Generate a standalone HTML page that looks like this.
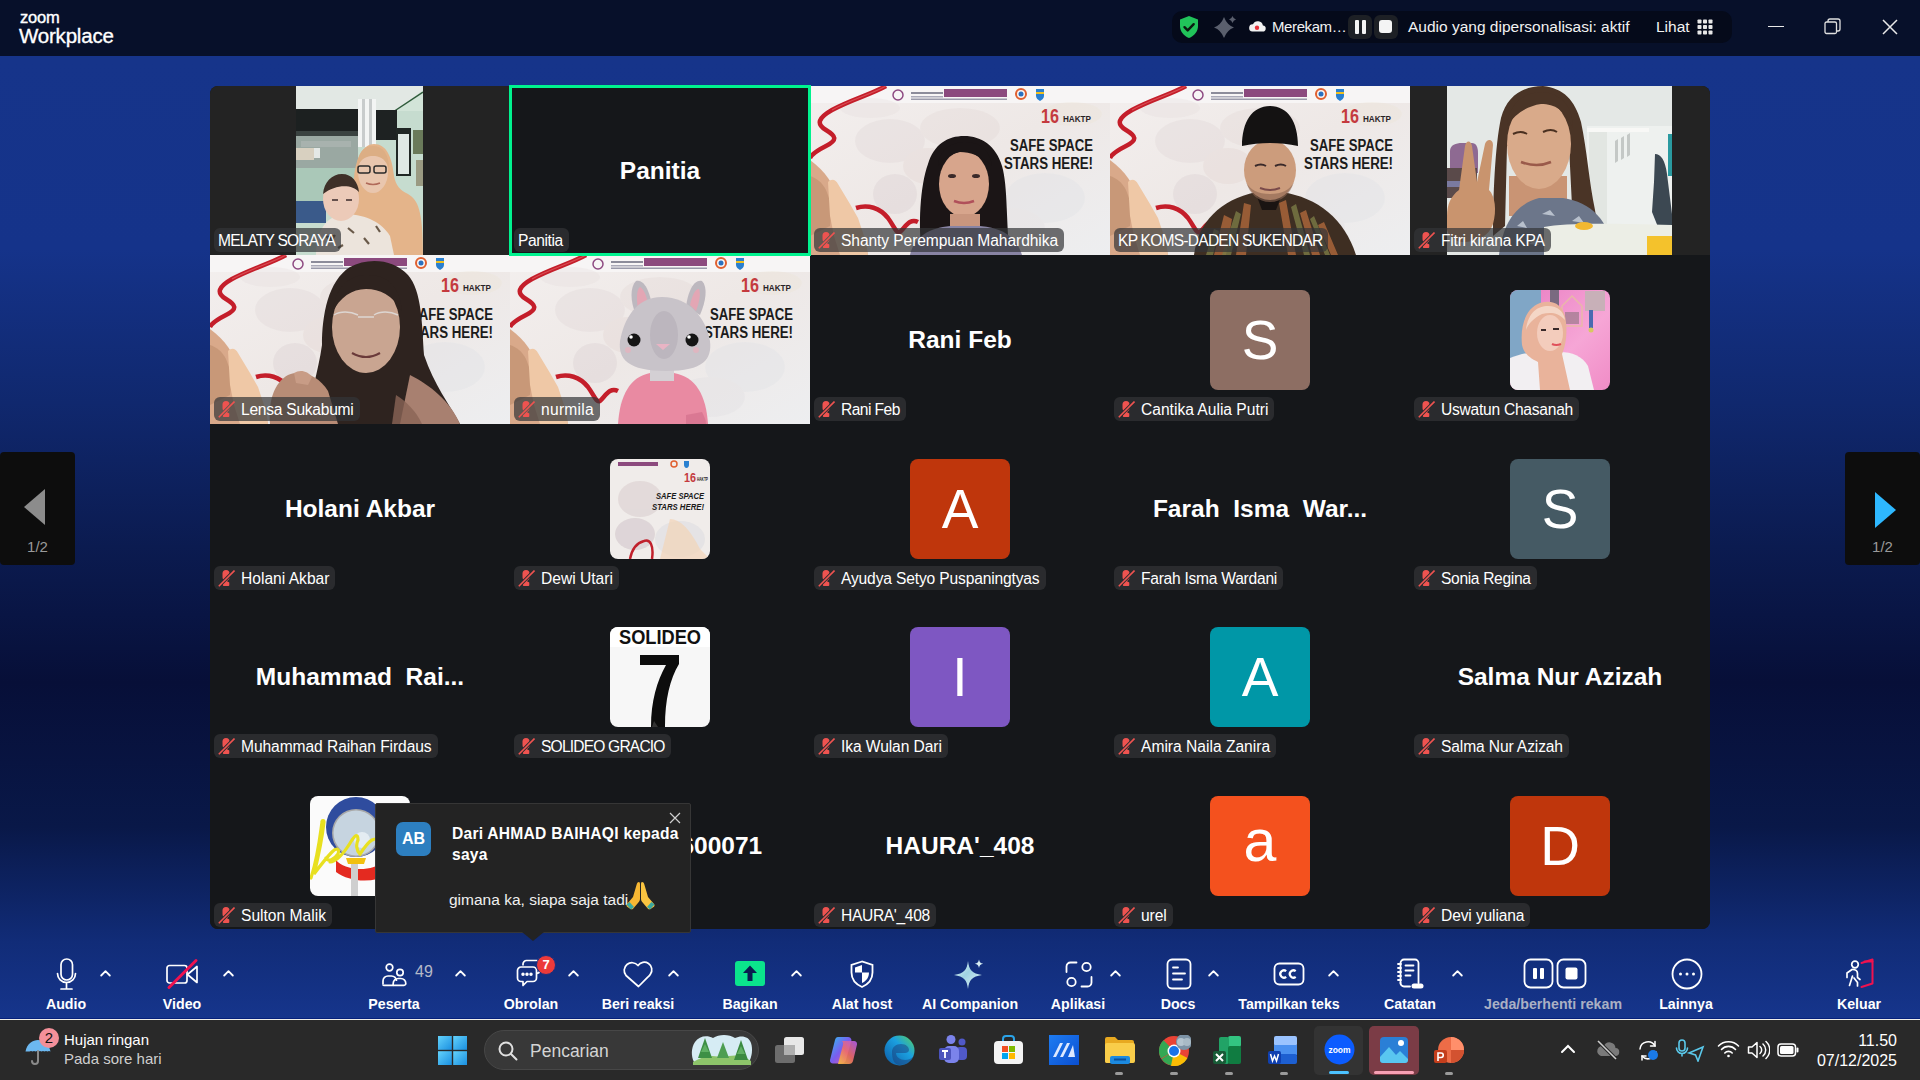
<!DOCTYPE html>
<html><head><meta charset="utf-8">
<style>
*{margin:0;padding:0;box-sizing:border-box}
html,body{width:1920px;height:1080px;overflow:hidden;font-family:"Liberation Sans",sans-serif;color:#fff}
body{position:relative;background:#0a153f}
.abs{position:absolute}
.tx15{font-size:15.5px;line-height:20px;white-space:nowrap;color:#f2f2f2}
#top{left:0;top:0;width:1920px;height:56px;background:#07102a}
#main{left:0;top:56px;width:1920px;height:963px;background:linear-gradient(180deg,#16348a 0%,#15338a 20%,#10286e 36%,#0b1b50 51%,#070f38 65%,#091848 80%,#112c78 92%,#16358c 100%)}
#grid{left:210px;top:86px;width:1500px;height:843px;border-radius:8px;overflow:hidden;background:#15171a}
.t{position:absolute;width:300px;height:169px;overflow:hidden;background:#15171a}
.lbl{position:absolute;left:4px;top:142px;height:24px;border-radius:6px;background:rgba(51,52,55,.7);font-size:15.6px;line-height:25px;padding:0 6px 0 4px;white-space:nowrap;color:#fff}
.lbl.m{padding-left:27px}
.lbl svg{position:absolute;left:4px;top:4px}
.big{position:absolute;left:0;top:0;width:300px;height:169px;display:flex;align-items:center;justify-content:center;font-weight:bold;font-size:24.5px;white-space:nowrap}
.av{position:absolute;left:100px;top:35px;width:100px;height:100px;border-radius:8px;display:flex;align-items:center;justify-content:center;font-size:55px;color:#fff;overflow:hidden}
.vb{position:absolute;left:0;top:0}
.hl{position:absolute;left:-1px;top:-1px;width:301px;height:170px;border:3px solid #00f090}
#taskbar{left:0;top:1019px;width:1920px;height:61px;background:#292929;}
.nav{position:absolute;top:452px;width:75px;height:113px;background:#0d0d0d;border-radius:4px}
.nav .pg{position:absolute;width:75px;text-align:center;top:86px;font-size:15px;color:#9a9a9a}
.tb{position:absolute;top:955px;height:60px;text-align:center;font-size:15px;font-weight:bold;color:#fff}
.tb .lab{position:absolute;left:-60px;right:-60px;top:38px;text-align:center;white-space:nowrap}
.tlab{top:995px;width:200px;text-align:center;font-size:14.2px;font-weight:bold;line-height:18px;white-space:nowrap}
</style></head>
<body>
<div id="top" class="abs">
 <div class="abs" style="left:20px;top:10px;font-size:16.5px;letter-spacing:-0.2px;line-height:15px;-webkit-text-stroke:0.4px #fff">zoom</div>
 <div class="abs" style="left:19px;top:24px;font-size:20.5px;line-height:24px;letter-spacing:-0.2px;-webkit-text-stroke:0.35px #fff">Workplace</div>
 <div class="abs" style="left:1172px;top:11px;width:560px;height:32px;border-radius:10px;background:#050a1a"></div>
 <svg class="abs" style="left:1178px;top:15px" width="22" height="24" viewBox="0 0 22 24"><path d="M11 1L2 4.5v6.5c0 5.5 3.8 10 9 12 5.2-2 9-6.5 9-12V4.5z" fill="#21c35a"/><path d="M6.5 12.2l3.2 3.2 6-6.2" stroke="#0b1a10" stroke-width="2.4" fill="none" stroke-linecap="round" stroke-linejoin="round"/></svg>
 <svg class="abs" style="left:1214px;top:14px" width="24" height="24" viewBox="0 0 24 24"><path d="M10 3Q13 11 20 13.5 13 16 10 24 7 16 0 13.5 7 11 10 3z" fill="#5a5f6d"/><path d="M18.5 2Q19.3 4.7 22 5.5 19.3 6.3 18.5 9 17.7 6.3 15 5.5 17.7 4.7 18.5 2z" fill="#5a5f6d"/></svg>
 <svg class="abs" style="left:1248px;top:19px" width="18" height="14" viewBox="0 0 18 14"><path d="M4.5 12.5h10a3 3 0 0 0 .4-6A5.2 5.2 0 0 0 5 5.3 3.6 3.6 0 0 0 4.5 12.5z" fill="#f2f2f2"/><circle cx="9" cy="8.7" r="2.2" fill="#e8313b"/></svg>
 <div class="abs tx15" style="left:1272px;top:17px;letter-spacing:-0.4px;font-size:15px">Merekam…</div>
 <div class="abs" style="left:1348px;top:15px;width:24px;height:24px;border-radius:6px;background:#1d2025"></div>
 <div class="abs" style="left:1355px;top:20px;width:4px;height:14px;border-radius:1px;background:#f4f4f4"></div>
 <div class="abs" style="left:1362px;top:20px;width:4px;height:14px;border-radius:1px;background:#f4f4f4"></div>
 <div class="abs" style="left:1374px;top:15px;width:24px;height:24px;border-radius:6px;background:#1d2025"></div>
 <div class="abs" style="left:1379px;top:20px;width:13px;height:13px;border-radius:3px;background:#f4f4f4"></div>
 <div class="abs tx15" style="left:1408px;top:17px">Audio yang dipersonalisasi: aktif</div>
 <div class="abs tx15" style="left:1656px;top:17px">Lihat</div>
 <svg class="abs" style="left:1697px;top:19px" width="16" height="16" viewBox="0 0 16 16" fill="#e8e8e8"><rect x="0.5" y="0.5" width="4" height="4" rx=".8"/><rect x="6" y="0.5" width="4" height="4" rx=".8"/><rect x="11.5" y="0.5" width="4" height="4" rx=".8"/><rect x="0.5" y="6" width="4" height="4" rx=".8"/><rect x="6" y="6" width="4" height="4" rx=".8"/><rect x="11.5" y="6" width="4" height="4" rx=".8"/><rect x="0.5" y="11.5" width="4" height="4" rx=".8"/><rect x="6" y="11.5" width="4" height="4" rx=".8"/><rect x="11.5" y="11.5" width="4" height="4" rx=".8"/></svg>
 <div class="abs" style="left:1768px;top:26px;width:16px;height:1px;background:#e8e8e8"></div>
 <svg class="abs" style="left:1824px;top:18px" width="17" height="17" viewBox="0 0 17 17" fill="none" stroke="#e0e0e0" stroke-width="1.3"><rect x="1" y="4" width="11.5" height="11.5" rx="1.5"/><path d="M4 4V3a2 2 0 0 1 2-2h8a2 2 0 0 1 2 2v8a2 2 0 0 1-2 2h-1.5"/></svg>
 <svg class="abs" style="left:1882px;top:19px" width="16" height="16" viewBox="0 0 16 16" stroke="#e8e8e8" stroke-width="1.5"><path d="M1 1L15 15M15 1L1 15"/></svg>
</div>
<div id="main" class="abs"></div>
<div id="grid" class="abs">
<svg width="0" height="0" style="position:absolute"><defs>
<linearGradient id="sbg" x1="0" y1="0" x2="1" y2="1"><stop offset="0" stop-color="#f3efee"/><stop offset=".5" stop-color="#eee8e6"/><stop offset="1" stop-color="#edeef0"/></linearGradient>
<symbol id="safebg" viewBox="0 0 300 169">
<rect width="300" height="169" fill="url(#sbg)"/>
<rect y="0" width="300" height="17" fill="#f7f5f5"/>
<g opacity=".3">
<ellipse cx="80" cy="55" rx="35" ry="22" fill="#ddd3d4"/>
<ellipse cx="150" cy="42" rx="40" ry="20" fill="#e0d5d3"/>
<ellipse cx="85" cy="108" rx="22" ry="20" fill="#d5cacd"/>
<ellipse cx="118" cy="80" rx="25" ry="18" fill="#e1d2ce"/>
<ellipse cx="235" cy="112" rx="40" ry="25" fill="#dde0e5"/>
<ellipse cx="200" cy="142" rx="35" ry="20" fill="#dfdde1"/>
<ellipse cx="60" cy="22" rx="30" ry="10" fill="#e4dcdc"/>
<ellipse cx="262" cy="28" rx="30" ry="12" fill="#ebe4d4"/>
<ellipse cx="150" cy="150" rx="40" ry="18" fill="#ddd4d4"/>
</g>
<path d="M0 74C8 80 14 86 18 92L30 110 44 132 56 160 58 169H0z" fill="#d9a98a"/>
<path d="M0 90C6 92 12 96 16 104L22 120 20 140 0 150z" fill="#c89878"/>
<path d="M18 96C22 92 26 94 28 98L40 118 48 132 56 156 58 169H30L24 150 20 130z" fill="#efc8a6"/>
<path d="M76 0C62 8 40 14 22 24 8 32 6 38 16 44 26 50 28 54 16 60 8 64 2 68 0 72" stroke="#c41e2a" stroke-width="4.5" fill="none"/>
<path d="M76 0C62 8 40 14 22 24" stroke="#e86a70" stroke-width="1.2" fill="none" opacity=".6"/>
<path d="M46 122C58 118 70 122 78 132 84 140 86 148 90 146 96 140 100 132 108 136" stroke="#c41e2a" stroke-width="4.5" fill="none"/>
<circle cx="88" cy="9" r="5" fill="none" stroke="#8e4a82" stroke-width="1.5"/>
<rect x="101" y="6" width="32" height="2" fill="#8c8c9a"/><rect x="101" y="10" width="32" height="1.5" fill="#aaaab8"/>
<rect x="134" y="3" width="63" height="8" fill="#8c4a7e"/>
<rect x="101" y="12.5" width="96" height="1.5" fill="#9a9aaa"/>
<circle cx="211" cy="8" r="5" fill="none" stroke="#e06030" stroke-width="2"/>
<circle cx="211" cy="8" r="2.5" fill="#2a70c0"/>
<path d="M226 3h8v7c0 2-2 4-4 5-2-1-4-3-4-5z" fill="#2a80d0"/><rect x="226" y="6" width="8" height="2" fill="#f0c020"/>
<text x="231" y="37" font-family="Liberation Sans" font-weight="bold" font-size="20" fill="#c43a3e" textLength="18" lengthAdjust="spacingAndGlyphs">16</text>
<text x="253" y="36" font-family="Liberation Sans" font-weight="bold" font-size="9.5" fill="#2a2226" textLength="28" lengthAdjust="spacingAndGlyphs">HAKTP</text>
<text x="200" y="64.5" font-family="Liberation Sans" font-weight="bold" font-size="16" fill="#1b1b1b" textLength="83" lengthAdjust="spacingAndGlyphs">SAFE SPACE</text>
<text x="194" y="83" font-family="Liberation Sans" font-weight="bold" font-size="16" fill="#1b1b1b" textLength="89" lengthAdjust="spacingAndGlyphs">STARS HERE!</text>
</symbol>
</defs></svg><svg width="0" height="0" style="position:absolute"><defs><mask id="micmask" maskUnits="userSpaceOnUse" x="0" y="0" width="17" height="17"><rect width="17" height="17" fill="#fff"/><path d="M0.8 16.2L16.5 0.5" stroke="#000" stroke-width="3.4"/></mask></defs></svg><div class="t " style="left:0px;top:0px;background:#232323"><svg class="vb" width="127" height="169" viewBox="0 0 127 169" style="left:86px">
<rect x="0" y="0" width="127" height="169" fill="#c6dccf"/>
<rect x="0" y="0" width="127" height="24" fill="#e2e8e4"/>
<path d="M127 4L100 25H127z" fill="#d2e4d8"/>
<path d="M127 6l-30 20" stroke="#2e5a3a" stroke-width="1.5"/>
<rect x="0" y="23" width="62" height="22" fill="#1c2020"/><rect x="0" y="45" width="62" height="6" fill="#3a4240"/>
<rect x="0" y="50" width="62" height="32" fill="#9aa8a2"/><rect x="4" y="62" width="20" height="10" fill="#e4e8e6"/>
<rect x="5" y="55" width="50" height="6" fill="#a8b2ae"/>
<rect x="0" y="62" width="18" height="12" fill="#d8d0c0"/>
<rect x="62" y="13" width="18" height="48" fill="#f3f5f4"/>
<rect x="66" y="13" width="3" height="48" fill="#c8cccc"/>
<rect x="73" y="13" width="3" height="48" fill="#c8cccc"/>
<rect x="80" y="24" width="21" height="30" fill="#1e2222"/>
<rect x="100" y="42" width="15" height="48" fill="#202624"/>
<rect x="102" y="48" width="11" height="40" fill="#dfe8e4"/>
<rect x="117" y="44" width="10" height="24" fill="#6a7a5a"/>
<rect x="120" y="74" width="7" height="26" fill="#9a9a82"/>
<rect x="0" y="82" width="62" height="36" fill="#aac8b8"/>
<rect x="0" y="115" width="30" height="22" fill="#3a5a8a"/>
<path d="M55 169C55 140 56 110 58 92 60 70 68 58 78 58 90 58 96 70 98 90 100 100 104 104 112 108 122 114 127 124 127 169z" fill="#e4b48a"/>
<ellipse cx="77" cy="86" rx="15" ry="21" fill="#e9c6ae"/>
<path d="M61 82c0-14 6-22 16-22 10 0 16 8 16 22-4-10-10-12-16-12-6 0-12 2-16 12z" fill="#dcae84"/>
<rect x="62" y="80" width="12" height="7" rx="2" fill="none" stroke="#2a2a2a" stroke-width="1.5"/>
<rect x="78" y="80" width="12" height="7" rx="2" fill="none" stroke="#2a2a2a" stroke-width="1.5"/>
<path d="M70 97q7 3 14 0" stroke="#b06a5a" stroke-width="1.5" fill="none"/>
<path d="M20 169C20 145 30 130 48 128 66 128 84 134 94 150L98 169z" fill="#ece4dc"/>
<path d="M30 150l5 5 4-6M52 142l6 5M68 152l5 6M42 162l5-3M80 140l4 6" stroke="#6a5a4a" stroke-width="2.2"/>
<ellipse cx="45" cy="113" rx="18" ry="22" fill="#eccab8"/>
<path d="M27 108C28 96 36 88 46 88 56 88 62 96 63 106 56 98 40 98 27 108z" fill="#3e3028"/>
<path d="M36 114h6M50 114h6" stroke="#3a2a2a" stroke-width="1.5"/>
</svg><div class="lbl" style="letter-spacing:-0.844px">MELATY SORAYA</div></div>
<div class="t " style="left:300px;top:0px;"><div class="big">Panitia</div><div class="lbl" style="letter-spacing:-0.427px">Panitia</div></div>
<div class="t " style="left:600px;top:0px;"><svg class="vb" width="300" height="169" viewBox="0 0 300 169"><use href="#safebg"/></svg><svg class="vb" width="300" height="169" viewBox="0 0 300 169" style="">
<path d="M112 169C108 140 110 100 118 78 124 58 138 50 154 50 172 50 186 60 192 80 198 100 196 140 200 169z" fill="#1b1516"/>
<ellipse cx="154" cy="98" rx="25" ry="33" fill="#d7a58c"/>
<path d="M128 80C130 62 142 56 156 56 170 56 180 64 182 80 172 70 160 66 150 66 140 68 132 74 128 80z" fill="#1b1516"/>
<ellipse cx="142" cy="90" rx="4" ry="2" fill="#3a2a2a"/><ellipse cx="166" cy="90" rx="4" ry="2" fill="#3a2a2a"/>
<path d="M144 115q10 4 20 0" stroke="#b0505a" stroke-width="2.5" fill="none"/>
<path d="M140 128h30v20h-30z" fill="#c9967e"/>
<path d="M100 169C104 150 120 142 140 140h30c22 2 36 10 42 29z" fill="#8884a4"/>
</svg><div class="lbl m" style="letter-spacing:-0.086px"><svg width="17" height="17" viewBox="0 0 17 17"><g mask="url(#micmask)"><rect x="4.5" y="0" width="7" height="10.5" rx="3.5" fill="#ef5350"/><rect x="6.5" y="9" width="3" height="4" fill="#ef5350"/><rect x="4.8" y="12" width="6.5" height="4" rx="1" fill="#ef5350"/></g><path d="M0.8 16.2L16.5 0.5" stroke="#ef5350" stroke-width="1.6"/></svg>Shanty Perempuan Mahardhika</div></div>
<div class="t " style="left:900px;top:0px;"><svg class="vb" width="300" height="169" viewBox="0 0 300 169"><use href="#safebg"/></svg><svg class="vb" width="300" height="169" viewBox="0 0 300 169" style="">
<path d="M84 169C88 136 110 114 146 106h26c36 6 62 26 74 63z" fill="#3e2e22"/>
<path d="M104 169l10-40 8 4-6 36zM126 169l8-52 7 2-5 50zM176 114l10 55h-8l-9-52zM196 124l14 45h-8l-12-42zM214 136l14 33h-7l-13-30z" fill="#a8643a" opacity=".85"/>
<path d="M112 169l14-44 5 3-10 41zM186 118l14 51h-6l-13-48zM204 130l16 39h-5l-15-36zM96 169l8-26 5 2-6 24z" fill="#7a7a46" opacity=".8"/>
<path d="M146 108h26l-6 16h-14z" fill="#1a1412"/>
<ellipse cx="160" cy="84" rx="26" ry="30" fill="#cc9c7c"/>
<path d="M136 96c4 12 12 20 24 20s20-8 24-20c-4 8-12 12-24 12s-20-4-24-12z" fill="#8a6450" opacity=".6"/>
<path d="M132 60C132 36 142 20 160 20 178 20 188 36 188 60c-18-4-38-4-56 0z" fill="#141212"/>
<path d="M145 80q6-3 11 0M165 80q6-3 11 0" stroke="#3a2a2a" stroke-width="2" fill="none"/>
<path d="M150 102q10 4 20 0" stroke="#7a4a4a" stroke-width="2" fill="none"/>
</svg><div class="lbl" style="letter-spacing:-0.775px">KP KOMS-DADEN SUKENDAR</div></div>
<div class="t " style="left:1200px;top:0px;background:#232323"><svg class="vb" width="225" height="169" viewBox="0 0 225 169" style="left:37px">
<rect x="0" y="0" width="225" height="169" fill="#e4e8e6"/>
<rect x="140" y="40" width="85" height="129" fill="#eef1ef"/>
<rect x="140" y="42" width="62" height="4" fill="#f8f8f6"/>
<rect x="142" y="46" width="18" height="123" fill="#e2e6e2"/>
<path d="M168 55l3-2v22l-3 2zM174 52l3-2v22l-3 2zM180 49l3-2v22l-3 2z" fill="#c4c8c6"/>
<path d="M208 68c6 0 10 6 12 20l5 40v22l-12-4-8-20 2-30z" fill="#3c4852"/>
<rect x="221" y="48" width="4" height="42" fill="#2a9aa0"/>
<path d="M3 65c0-6 6-8 12-8h10c4 0 6 4 6 10v20H3z" fill="#8e6a92"/>
<rect x="0" y="82" width="30" height="30" fill="#5a4a4a"/>
<rect x="0" y="95" width="25" height="6" fill="#7a7aa0"/>
<path d="M46 150C46 110 48 60 54 32 60 10 76 0 96 0 116 2 128 14 134 36 140 64 142 96 148 124L152 150 126 140 122 60 60 60 58 140z" fill="#4a3426"/>
<path d="M62 90h58v40H62z" fill="#c99474"/><ellipse cx="92" cy="58" rx="32" ry="45" fill="#d9aa8a"/>
<path d="M60 40C62 18 76 6 96 6 116 8 126 22 126 42 118 24 108 18 94 18 80 20 68 28 60 40z" fill="#4a3426"/>
<path d="M66 48q8-4 14 0M96 46q8-4 14 0" stroke="#4a3020" stroke-width="2" fill="none"/>
<path d="M74 76q16 6 30 0" stroke="#9a5a4a" stroke-width="2.5" fill="none"/>
<path d="M52 169C56 135 70 118 92 112h24c28 4 46 22 52 57z" fill="#6c768a"/>
<path d="M70 140l6-5 4 7zM95 128l8-4 5 6zM125 135l7-5 5 7zM150 150l7-4 4 6zM82 158l6-4 4 5zM112 150l6-4 5 6z" fill="#b8c0cc"/>
<path d="M0 130C0 118 4 110 12 104L18 60c1-6 6-6 7 0L30 96 38 58c2-6 8-5 8 1L42 104c6 6 8 20 4 34-4 12-16 18-30 18-8 0-14-6-16-12z" fill="#c9946e"/>
<path d="M97 141c20-4 60-4 128-2v30H97z" fill="#eceee6"/>
<rect x="200" y="150" width="25" height="19" fill="#f4c22c"/>
<ellipse cx="137" cy="140" rx="9" ry="4" fill="#f2b830"/>
</svg><div class="lbl m" style="letter-spacing:-0.223px"><svg width="17" height="17" viewBox="0 0 17 17"><g mask="url(#micmask)"><rect x="4.5" y="0" width="7" height="10.5" rx="3.5" fill="#ef5350"/><rect x="6.5" y="9" width="3" height="4" fill="#ef5350"/><rect x="4.8" y="12" width="6.5" height="4" rx="1" fill="#ef5350"/></g><path d="M0.8 16.2L16.5 0.5" stroke="#ef5350" stroke-width="1.6"/></svg>Fitri kirana KPA</div></div>
<div class="t " style="left:0px;top:169px;"><svg class="vb" width="300" height="169" viewBox="0 0 300 169"><use href="#safebg"/></svg><svg class="vb" width="300" height="169" viewBox="0 0 300 169" style="">
<path d="M96 169C100 140 108 118 112 90 112 60 118 26 140 12 158 2 184 4 198 20 212 36 212 70 214 100 224 130 240 150 250 169z" fill="#2e231f"/>
<path d="M200 120c20 10 40 26 50 49H190z" fill="#a88070"/>
<path d="M186 140c10 6 20 16 26 29h-30z" fill="#8a6456" opacity=".8"/>
<ellipse cx="156" cy="72" rx="34" ry="46" fill="#c9a591"/>
<path d="M122 58C126 30 140 20 158 20 178 20 190 32 192 56 182 40 170 34 156 34 142 34 130 42 122 58z" fill="#2e231f"/>
<path d="M124 60c6-4 16-4 24 0M164 60c6-4 16-4 24 0M148 62h16" stroke="#ddd6d2" stroke-width="1.4" fill="none"/>
<path d="M142 98q14 8 28 0" stroke="#6a3a3a" stroke-width="2.2" fill="none"/>
<path d="M60 169C58 146 64 128 78 120 92 114 108 120 118 136L128 169z" fill="#b88c76"/>
<path d="M84 118c6-4 14-2 18 4l-4 8-12-2z" fill="#c89c86"/>
</svg><div class="lbl m" style="letter-spacing:-0.262px"><svg width="17" height="17" viewBox="0 0 17 17"><g mask="url(#micmask)"><rect x="4.5" y="0" width="7" height="10.5" rx="3.5" fill="#ef5350"/><rect x="6.5" y="9" width="3" height="4" fill="#ef5350"/><rect x="4.8" y="12" width="6.5" height="4" rx="1" fill="#ef5350"/></g><path d="M0.8 16.2L16.5 0.5" stroke="#ef5350" stroke-width="1.6"/></svg>Lensa Sukabumi</div></div>
<div class="t " style="left:300px;top:169px;"><svg class="vb" width="300" height="169" viewBox="0 0 300 169"><use href="#safebg"/></svg><svg class="vb" width="300" height="169" viewBox="0 0 300 169" style="">
<path d="M108 169C110 140 120 122 140 118h24c22 4 32 22 34 51z" fill="#e98aa2"/>
<path d="M176 160v9h20c0-4-2-8-4-12z" fill="#d06c88" opacity=".6"/>
<rect x="140" y="108" width="24" height="18" fill="#d4d0d4"/>
<path d="M126 60C120 46 120 32 126 26 134 24 140 36 142 52z" fill="#bdb8bf"/>
<path d="M176 52C178 36 184 24 192 26 198 32 196 46 190 60z" fill="#bdb8bf"/>
<path d="M128 54C126 42 127 34 130 32 134 34 137 42 138 50z" fill="#e3a6b4"/>
<path d="M180 50C182 40 186 33 189 34 191 40 189 48 186 56z" fill="#e3a6b4"/>
<path d="M152 42C126 42 114 64 110 86 108 104 118 116 156 116 194 116 202 104 200 86 196 64 180 42 152 42z" fill="#c8c3c9"/>
<ellipse cx="154" cy="80" rx="14" ry="24" fill="#b7b0b9" opacity=".7"/>
<circle cx="124" cy="85" r="6.5" fill="#151515"/><circle cx="182" cy="85" r="6.5" fill="#151515"/>
<circle cx="121" cy="82" r="1.8" fill="#fff"/><circle cx="179" cy="82" r="1.8" fill="#fff"/>
<circle cx="118" cy="95" r="3" fill="#e8b0bc" opacity=".7"/><circle cx="186" cy="95" r="3" fill="#e8b0bc" opacity=".7"/>
<path d="M146 89h14l-7 6z" fill="#e8b4c4"/>
</svg><div class="lbl m" style="letter-spacing:0.266px"><svg width="17" height="17" viewBox="0 0 17 17"><g mask="url(#micmask)"><rect x="4.5" y="0" width="7" height="10.5" rx="3.5" fill="#ef5350"/><rect x="6.5" y="9" width="3" height="4" fill="#ef5350"/><rect x="4.8" y="12" width="6.5" height="4" rx="1" fill="#ef5350"/></g><path d="M0.8 16.2L16.5 0.5" stroke="#ef5350" stroke-width="1.6"/></svg>nurmila</div></div>
<div class="t " style="left:600px;top:169px;"><div class="big">Rani Feb</div><div class="lbl m" style="letter-spacing:-0.56px"><svg width="17" height="17" viewBox="0 0 17 17"><g mask="url(#micmask)"><rect x="4.5" y="0" width="7" height="10.5" rx="3.5" fill="#ef5350"/><rect x="6.5" y="9" width="3" height="4" fill="#ef5350"/><rect x="4.8" y="12" width="6.5" height="4" rx="1" fill="#ef5350"/></g><path d="M0.8 16.2L16.5 0.5" stroke="#ef5350" stroke-width="1.6"/></svg>Rani Feb</div></div>
<div class="t " style="left:900px;top:169px;"><div class="av" style="background:#8d6e63;">S</div><div class="lbl m"><svg width="17" height="17" viewBox="0 0 17 17"><g mask="url(#micmask)"><rect x="4.5" y="0" width="7" height="10.5" rx="3.5" fill="#ef5350"/><rect x="6.5" y="9" width="3" height="4" fill="#ef5350"/><rect x="4.8" y="12" width="6.5" height="4" rx="1" fill="#ef5350"/></g><path d="M0.8 16.2L16.5 0.5" stroke="#ef5350" stroke-width="1.6"/></svg>Cantika Aulia Putri</div></div>
<div class="t " style="left:1200px;top:169px;"><div class="av"><svg class="vb" width="100" height="100" viewBox="0 0 100 100" style="">
<defs><linearGradient id="uspk" x1="0" y1="0" x2="1" y2="1"><stop offset="0" stop-color="#e97cc2"/><stop offset=".6" stop-color="#f6a6d6"/><stop offset="1" stop-color="#f08cc6"/></linearGradient></defs>
<rect width="100" height="100" fill="url(#uspk)"/>
<rect x="0" y="0" width="31" height="68" fill="#80a6c6"/>
<rect x="40" y="0" width="9" height="17" fill="#7a6a80"/>
<path d="M62 6l10 10v20H52V16z" fill="none" stroke="#e8b8a8" stroke-width="1.5"/>
<rect x="55" y="22" width="14" height="12" fill="#9a7a8a" opacity=".7"/>
<rect x="75" y="1" width="20" height="20" fill="#c8b0b8"/>
<rect x="79" y="20" width="4" height="18" fill="#4a6ab0"/>
<circle cx="81" cy="40" r="2.5" fill="#d8c860"/>
<path d="M0 100V68c10-4 20-6 30-6h20c12 0 22 4 28 14l6 24z" fill="#f2eff2"/>
<path d="M12 55C10 35 16 18 30 13 42 9 52 14 55 26 58 40 56 56 52 64L60 100H30L28 72C20 68 14 64 12 55z" fill="#e9b39b"/>
<path d="M16 40C18 22 28 16 38 16 48 16 54 22 55 30 48 22 40 22 32 24 24 28 18 34 16 40z" fill="#f4d6c6"/>
<ellipse cx="40" cy="43" rx="13" ry="18" fill="#f3ccbc"/>
<path d="M31 40h5M43 39h6" stroke="#3a2a2a" stroke-width="1.8"/>
<path d="M42 54q4 2 9 0" stroke="#e0505a" stroke-width="2.2" fill="none"/>
</svg></div><div class="lbl m" style="letter-spacing:-0.257px"><svg width="17" height="17" viewBox="0 0 17 17"><g mask="url(#micmask)"><rect x="4.5" y="0" width="7" height="10.5" rx="3.5" fill="#ef5350"/><rect x="6.5" y="9" width="3" height="4" fill="#ef5350"/><rect x="4.8" y="12" width="6.5" height="4" rx="1" fill="#ef5350"/></g><path d="M0.8 16.2L16.5 0.5" stroke="#ef5350" stroke-width="1.6"/></svg>Uswatun Chasanah</div></div>
<div class="t " style="left:0px;top:338px;"><div class="big">Holani Akbar</div><div class="lbl m"><svg width="17" height="17" viewBox="0 0 17 17"><g mask="url(#micmask)"><rect x="4.5" y="0" width="7" height="10.5" rx="3.5" fill="#ef5350"/><rect x="6.5" y="9" width="3" height="4" fill="#ef5350"/><rect x="4.8" y="12" width="6.5" height="4" rx="1" fill="#ef5350"/></g><path d="M0.8 16.2L16.5 0.5" stroke="#ef5350" stroke-width="1.6"/></svg>Holani Akbar</div></div>
<div class="t " style="left:300px;top:338px;"><div class="av"><svg class="vb" width="100" height="100" viewBox="0 0 100 100" style="">
<rect width="100" height="100" fill="#f0ecea"/>
<g opacity=".55"><ellipse cx="30" cy="40" rx="22" ry="18" fill="#d8cccc"/><ellipse cx="25" cy="75" rx="20" ry="16" fill="#d0c4c8"/><ellipse cx="70" cy="80" rx="25" ry="18" fill="#dcdce0"/></g>
<rect x="8" y="3" width="40" height="4" fill="#8c4a7e"/>
<circle cx="64" cy="5" r="3" fill="none" stroke="#e06030" stroke-width="1.5"/><path d="M74 2h5v4c0 1-1 3-2.5 3S74 7 74 6z" fill="#2a80d0"/>
<text x="74" y="23" font-family="Liberation Sans" font-weight="bold" font-size="13" fill="#c43a3e" textLength="12" lengthAdjust="spacingAndGlyphs">16</text>
<text x="87" y="22" font-family="Liberation Sans" font-weight="bold" font-size="5" fill="#2a2226" textLength="11" lengthAdjust="spacingAndGlyphs">HAKTP</text>
<text x="46" y="40" font-family="Liberation Sans" font-weight="bold" font-style="italic" font-size="8.5" fill="#1b1b1b" textLength="48" lengthAdjust="spacingAndGlyphs">SAFE SPACE</text>
<text x="42" y="51" font-family="Liberation Sans" font-weight="bold" font-style="italic" font-size="8.5" fill="#1b1b1b" textLength="52" lengthAdjust="spacingAndGlyphs">STARS HERE!</text>
<path d="M20 100C22 90 26 84 34 82 40 80 44 86 42 100" stroke="#c0202c" stroke-width="2.5" fill="none"/>
<path d="M60 60c10 0 20 10 30 30l10 10H50z" fill="#f2d4b8" opacity=".7"/>
</svg></div><div class="lbl m"><svg width="17" height="17" viewBox="0 0 17 17"><g mask="url(#micmask)"><rect x="4.5" y="0" width="7" height="10.5" rx="3.5" fill="#ef5350"/><rect x="6.5" y="9" width="3" height="4" fill="#ef5350"/><rect x="4.8" y="12" width="6.5" height="4" rx="1" fill="#ef5350"/></g><path d="M0.8 16.2L16.5 0.5" stroke="#ef5350" stroke-width="1.6"/></svg>Dewi Utari</div></div>
<div class="t " style="left:600px;top:338px;"><div class="av" style="background:#bf360c;">A</div><div class="lbl m" style="letter-spacing:-0.157px"><svg width="17" height="17" viewBox="0 0 17 17"><g mask="url(#micmask)"><rect x="4.5" y="0" width="7" height="10.5" rx="3.5" fill="#ef5350"/><rect x="6.5" y="9" width="3" height="4" fill="#ef5350"/><rect x="4.8" y="12" width="6.5" height="4" rx="1" fill="#ef5350"/></g><path d="M0.8 16.2L16.5 0.5" stroke="#ef5350" stroke-width="1.6"/></svg>Ayudya Setyo Puspaningtyas</div></div>
<div class="t " style="left:900px;top:338px;"><div class="big">Farah&nbsp; Isma&nbsp; War...</div><div class="lbl m" style="letter-spacing:-0.26px"><svg width="17" height="17" viewBox="0 0 17 17"><g mask="url(#micmask)"><rect x="4.5" y="0" width="7" height="10.5" rx="3.5" fill="#ef5350"/><rect x="6.5" y="9" width="3" height="4" fill="#ef5350"/><rect x="4.8" y="12" width="6.5" height="4" rx="1" fill="#ef5350"/></g><path d="M0.8 16.2L16.5 0.5" stroke="#ef5350" stroke-width="1.6"/></svg>Farah Isma Wardani</div></div>
<div class="t " style="left:1200px;top:338px;"><div class="av" style="background:#455a64;">S</div><div class="lbl m" style="letter-spacing:-0.337px"><svg width="17" height="17" viewBox="0 0 17 17"><g mask="url(#micmask)"><rect x="4.5" y="0" width="7" height="10.5" rx="3.5" fill="#ef5350"/><rect x="6.5" y="9" width="3" height="4" fill="#ef5350"/><rect x="4.8" y="12" width="6.5" height="4" rx="1" fill="#ef5350"/></g><path d="M0.8 16.2L16.5 0.5" stroke="#ef5350" stroke-width="1.6"/></svg>Sonia Regina</div></div>
<div class="t " style="left:0px;top:506px;"><div class="big">Muhammad&nbsp; Rai...</div><div class="lbl m" style="letter-spacing:-0.079px"><svg width="17" height="17" viewBox="0 0 17 17"><g mask="url(#micmask)"><rect x="4.5" y="0" width="7" height="10.5" rx="3.5" fill="#ef5350"/><rect x="6.5" y="9" width="3" height="4" fill="#ef5350"/><rect x="4.8" y="12" width="6.5" height="4" rx="1" fill="#ef5350"/></g><path d="M0.8 16.2L16.5 0.5" stroke="#ef5350" stroke-width="1.6"/></svg>Muhammad Raihan Firdaus</div></div>
<div class="t " style="left:300px;top:506px;"><div class="av"><svg class="vb" width="100" height="100" viewBox="0 0 100 100" style="">
<rect width="100" height="100" fill="#f7f7f7"/>
<rect width="100" height="20" fill="#ffffff"/>
<text x="9" y="17" font-family="Liberation Sans" font-weight="bold" font-size="20" fill="#111" textLength="82" lengthAdjust="spacingAndGlyphs">SOLIDEO</text>
<path d="M30 28h39v9C60 52 55 72 55 100H41C41 74 47 54 56 38H30z" fill="#0d0d0d"/>
<path d="M44 94l4 6h-6z" fill="#333"/>
</svg></div><div class="lbl m" style="letter-spacing:-0.821px"><svg width="17" height="17" viewBox="0 0 17 17"><g mask="url(#micmask)"><rect x="4.5" y="0" width="7" height="10.5" rx="3.5" fill="#ef5350"/><rect x="6.5" y="9" width="3" height="4" fill="#ef5350"/><rect x="4.8" y="12" width="6.5" height="4" rx="1" fill="#ef5350"/></g><path d="M0.8 16.2L16.5 0.5" stroke="#ef5350" stroke-width="1.6"/></svg>SOLIDEO GRACIO</div></div>
<div class="t " style="left:600px;top:506px;"><div class="av" style="background:#7e57c2;">I</div><div class="lbl m" style="letter-spacing:-0.085px"><svg width="17" height="17" viewBox="0 0 17 17"><g mask="url(#micmask)"><rect x="4.5" y="0" width="7" height="10.5" rx="3.5" fill="#ef5350"/><rect x="6.5" y="9" width="3" height="4" fill="#ef5350"/><rect x="4.8" y="12" width="6.5" height="4" rx="1" fill="#ef5350"/></g><path d="M0.8 16.2L16.5 0.5" stroke="#ef5350" stroke-width="1.6"/></svg>Ika Wulan Dari</div></div>
<div class="t " style="left:900px;top:506px;"><div class="av" style="background:#0097a7;">A</div><div class="lbl m"><svg width="17" height="17" viewBox="0 0 17 17"><g mask="url(#micmask)"><rect x="4.5" y="0" width="7" height="10.5" rx="3.5" fill="#ef5350"/><rect x="6.5" y="9" width="3" height="4" fill="#ef5350"/><rect x="4.8" y="12" width="6.5" height="4" rx="1" fill="#ef5350"/></g><path d="M0.8 16.2L16.5 0.5" stroke="#ef5350" stroke-width="1.6"/></svg>Amira Naila Zanira</div></div>
<div class="t " style="left:1200px;top:506px;"><div class="big">Salma Nur Azizah</div><div class="lbl m" style="letter-spacing:-0.127px"><svg width="17" height="17" viewBox="0 0 17 17"><g mask="url(#micmask)"><rect x="4.5" y="0" width="7" height="10.5" rx="3.5" fill="#ef5350"/><rect x="6.5" y="9" width="3" height="4" fill="#ef5350"/><rect x="4.8" y="12" width="6.5" height="4" rx="1" fill="#ef5350"/></g><path d="M0.8 16.2L16.5 0.5" stroke="#ef5350" stroke-width="1.6"/></svg>Salma Nur Azizah</div></div>
<div class="t " style="left:0px;top:675px;"><div class="av"><svg class="vb" width="100" height="100" viewBox="0 0 100 100" style="">
<rect width="100" height="100" fill="#fbfbfb"/>
<circle cx="46" cy="31" r="30" fill="#2f4c9e"/>
<path d="M26 64c8 10 34 14 50 0l4 14c-18 10-40 8-54-2z" fill="#e42a20"/>
<circle cx="46" cy="37" r="24" fill="#a8a8a8"/>
<circle cx="46" cy="37" r="22.5" fill="#c6d4e0"/>
<circle cx="52" cy="44" r="8" fill="#e4ecf2"/>
<path d="M36 62h20l-2 6H38z" fill="#f2c010"/>
<rect x="41" y="68" width="7" height="32" fill="#cfcfcf"/>
<path d="M1 82C8 60 10 40 12 26 12 24 14 24 14 26 12 44 8 62 4 78 10 70 18 60 22 56 26 52 30 52 28 58 24 64 18 66 16 62M20 66c8 0 16-12 22-22 4-6 6-6 6 0-2 4-2 10 2 14 4-6 8-12 12-14 4-2 6 0 10-2 4-2 6-4 8-6" stroke="#e8e020" stroke-width="3.2" fill="none" stroke-linecap="round"/>
</svg></div><div class="lbl m"><svg width="17" height="17" viewBox="0 0 17 17"><g mask="url(#micmask)"><rect x="4.5" y="0" width="7" height="10.5" rx="3.5" fill="#ef5350"/><rect x="6.5" y="9" width="3" height="4" fill="#ef5350"/><rect x="4.8" y="12" width="6.5" height="4" rx="1" fill="#ef5350"/></g><path d="M0.8 16.2L16.5 0.5" stroke="#ef5350" stroke-width="1.6"/></svg>Sulton Malik</div></div>
<div class="t " style="left:300px;top:675px;"><div class="big">628515666600071</div></div>
<div class="t " style="left:600px;top:675px;"><div class="big">HAURA'_408</div><div class="lbl m" style="letter-spacing:-0.347px"><svg width="17" height="17" viewBox="0 0 17 17"><g mask="url(#micmask)"><rect x="4.5" y="0" width="7" height="10.5" rx="3.5" fill="#ef5350"/><rect x="6.5" y="9" width="3" height="4" fill="#ef5350"/><rect x="4.8" y="12" width="6.5" height="4" rx="1" fill="#ef5350"/></g><path d="M0.8 16.2L16.5 0.5" stroke="#ef5350" stroke-width="1.6"/></svg>HAURA&#x27;_408</div></div>
<div class="t " style="left:900px;top:675px;"><div class="av" style="background:#f4511e;font-size:59px;padding-bottom:10px">a</div><div class="lbl m" style="letter-spacing:-0.079px"><svg width="17" height="17" viewBox="0 0 17 17"><g mask="url(#micmask)"><rect x="4.5" y="0" width="7" height="10.5" rx="3.5" fill="#ef5350"/><rect x="6.5" y="9" width="3" height="4" fill="#ef5350"/><rect x="4.8" y="12" width="6.5" height="4" rx="1" fill="#ef5350"/></g><path d="M0.8 16.2L16.5 0.5" stroke="#ef5350" stroke-width="1.6"/></svg>urel</div></div>
<div class="t " style="left:1200px;top:675px;"><div class="av" style="background:#bf360c;">D</div><div class="lbl m" style="letter-spacing:-0.129px"><svg width="17" height="17" viewBox="0 0 17 17"><g mask="url(#micmask)"><rect x="4.5" y="0" width="7" height="10.5" rx="3.5" fill="#ef5350"/><rect x="6.5" y="9" width="3" height="4" fill="#ef5350"/><rect x="4.8" y="12" width="6.5" height="4" rx="1" fill="#ef5350"/></g><path d="M0.8 16.2L16.5 0.5" stroke="#ef5350" stroke-width="1.6"/></svg>Devi yuliana</div></div>
</div>
<div class="abs" style="left:509px;top:85px;width:302px;height:171px;border:3px solid #00f28e"></div>
<div class="abs" style="left:375px;top:803px;width:316px;height:130px;background:#232323;border:1px solid #363636;border-radius:2px"></div>
<svg class="abs" style="left:522px;top:932px" width="22" height="10" viewBox="0 0 22 10"><path d="M0 0L11 9 22 0z" fill="#232323"/></svg>
<svg class="abs" style="left:669px;top:812px" width="12" height="12" viewBox="0 0 12 12" stroke="#cfcfcf" stroke-width="1.2"><path d="M1 1l10 10M11 1L1 11"/></svg>
<div class="abs" style="left:396px;top:822px;width:35px;height:34px;border-radius:7px;background:#2d7fc0;font-size:16px;font-weight:bold;text-align:center;line-height:34px">AB</div>
<div class="abs" style="left:452px;top:823px;width:238px;font-size:15.6px;font-weight:bold;line-height:21px;color:#fff;letter-spacing:0.25px">Dari AHMAD BAIHAQI kepada saya</div>
<div class="abs" style="left:449px;top:890px;font-size:15.5px;line-height:20px;color:#f0f0f0;white-space:nowrap">gimana ka, siapa saja tadi</div>
<svg class="abs" style="left:624px;top:880px" width="33" height="31" viewBox="0 0 33 31"><path d="M15 2c-1.5 0-2 1-2.5 3L9 17l-6 7c-1 1.2-.5 2.5.5 3l3 2c1 .6 2 .3 2.8-.6l5.5-6.5c.8-1 1.2-2 1.2-3.5V4c0-1.2-.5-2-1-2z" fill="#f7b733"/><path d="M18 2c1.5 0 2 1 2.5 3L24 17l6 7c1 1.2.5 2.5-.5 3l-3 2c-1 .6-2 .3-2.8-.6l-5.5-6.5c-.8-1-1.2-2-1.2-3.5V4c0-1.2.5-2 1-2z" fill="#f9c440"/><path d="M2.5 24.5l4.5 5 3-2.5-4.5-5zM30.5 24.5l-4.5 5-3-2.5 4.5-5z" fill="#3aa8a0"/></svg>
<div class="abs tlab" style="left:-34px;color:#fff">Audio</div>
<svg class="abs" style="left:56px;top:958px" width="21" height="33" viewBox="0 0 21 33" fill="none" stroke="#fff" stroke-width="1.7" stroke-linecap="round"><rect x="5" y="1" width="11.5" height="21" rx="5.75"/><path d="M1.5 15.5a9 9 0 0 0 18 0"/><path d="M10.5 24.5v6.5M5 31h11"/></svg>
<svg class="abs" style="left:100px;top:969px" width="11" height="8" viewBox="0 0 11 8"><path d="M1.2 6.5L5.5 2.2 9.8 6.5" stroke="#fff" stroke-width="1.8" fill="none" stroke-linecap="round" stroke-linejoin="round"/></svg>
<div class="abs tlab" style="left:82px;color:#fff">Video</div>
<svg class="abs" style="left:165px;top:958px" width="34" height="32" viewBox="0 0 34 32" fill="none" stroke="#fff" stroke-width="1.7" stroke-linejoin="round"><rect x="2" y="7.5" width="20" height="17.5" rx="2.5"/><path d="M22.5 16.5l9.5-8v16z"/><path d="M4 29.5L31 2.5" stroke="#f0124f" stroke-width="3" stroke-linecap="round"/></svg>
<svg class="abs" style="left:223px;top:969px" width="11" height="8" viewBox="0 0 11 8"><path d="M1.2 6.5L5.5 2.2 9.8 6.5" stroke="#fff" stroke-width="1.8" fill="none" stroke-linecap="round" stroke-linejoin="round"/></svg>
<div class="abs tlab" style="left:294px;color:#fff">Peserta</div>
<svg class="abs" style="left:381px;top:962px" width="26" height="25" viewBox="0 0 26 25" fill="none" stroke="#fff" stroke-width="1.7"><circle cx="8.5" cy="5.5" r="3.3"/><path d="M2 22.5v-3.5a5 5 0 0 1 5-5h3.5a5 5 0 0 1 5 5"/><circle cx="19" cy="10.5" r="3.2"/><path d="M12.5 23.3h10.5a1.8 1.8 0 0 0 1.8-1.8 5 5 0 0 0-5-5h-2.6a5 5 0 0 0-5 5 1.8 1.8 0 0 0 .3 1.8z"/><path d="M2 22.5a0.8 .8 0 0 0 .8.8h9.5"/></svg>
<div class="abs" style="left:415px;top:963px;font-size:16px;color:#b5b9c8">49</div>
<svg class="abs" style="left:455px;top:969px" width="11" height="8" viewBox="0 0 11 8"><path d="M1.2 6.5L5.5 2.2 9.8 6.5" stroke="#fff" stroke-width="1.8" fill="none" stroke-linecap="round" stroke-linejoin="round"/></svg>
<div class="abs tlab" style="left:431px;color:#fff">Obrolan</div>
<svg class="abs" style="left:516px;top:959px" width="26" height="30" viewBox="0 0 26 30" fill="none" stroke="#fff" stroke-width="1.7" stroke-linejoin="round"><path d="M7 6.5V5a3.5 3.5 0 0 1 3.5-3.5h10A3.5 3.5 0 0 1 24 5v6a3.5 3.5 0 0 1-3 3.4"/><path d="M5 8h12a3.5 3.5 0 0 1 3.5 3.5v7.5a3.5 3.5 0 0 1-3.5 3.5h-6l-4 4v-4H5A3.5 3.5 0 0 1 1.5 19v-7.5A3.5 3.5 0 0 1 5 8z"/><circle cx="7" cy="15.3" r=".9" fill="#fff"/><circle cx="11" cy="15.3" r=".9" fill="#fff"/><circle cx="15" cy="15.3" r=".9" fill="#fff"/></svg>
<div class="abs" style="left:536px;top:955px;width:20px;height:20px;border-radius:10px;background:#ec3a3a;border:1px solid #1a2f80;font-size:13px;font-weight:bold;text-align:center;line-height:18px">7</div>
<svg class="abs" style="left:568px;top:969px" width="11" height="8" viewBox="0 0 11 8"><path d="M1.2 6.5L5.5 2.2 9.8 6.5" stroke="#fff" stroke-width="1.8" fill="none" stroke-linecap="round" stroke-linejoin="round"/></svg>
<div class="abs tlab" style="left:538px;color:#fff">Beri reaksi</div>
<svg class="abs" style="left:622px;top:960px" width="33" height="28" viewBox="0 0 33 28" fill="none" stroke="#fff" stroke-width="1.7" stroke-linejoin="round"><path d="M16.5 26.5L4 15.5A7.5 7.5 0 0 1 16 5.5a7.5 7.5 0 0 1 12.5 8.5c-.9 1.6-2 2.5-3 3.4z"/></svg>
<svg class="abs" style="left:668px;top:969px" width="11" height="8" viewBox="0 0 11 8"><path d="M1.2 6.5L5.5 2.2 9.8 6.5" stroke="#fff" stroke-width="1.8" fill="none" stroke-linecap="round" stroke-linejoin="round"/></svg>
<div class="abs tlab" style="left:650px;color:#fff">Bagikan</div>
<div class="abs" style="left:735px;top:961px;width:30px;height:25px;border-radius:3px;background:#0be48c"></div>
<svg class="abs" style="left:741px;top:964px" width="18" height="19" viewBox="0 0 18 19"><path d="M9 1.5L2 9h4.5v8h5V9H16z" fill="#0a1d4f"/></svg>
<svg class="abs" style="left:791px;top:969px" width="11" height="8" viewBox="0 0 11 8"><path d="M1.2 6.5L5.5 2.2 9.8 6.5" stroke="#fff" stroke-width="1.8" fill="none" stroke-linecap="round" stroke-linejoin="round"/></svg>
<div class="abs tlab" style="left:762px;color:#fff">Alat host</div>
<svg class="abs" style="left:849px;top:960px" width="26" height="29" viewBox="0 0 26 29"><path d="M13 1.5L2.5 5v7.5c0 7 4.5 11.8 10.5 14.5 6-2.7 10.5-7.5 10.5-14.5V5z" fill="none" stroke="#fff" stroke-width="1.8"/><path d="M13 5L6 7.5v5H13z" fill="#fff"/><path d="M13 12.5h7c0 5-2.8 8.5-7 10.5z" fill="#fff"/></svg>
<div class="abs tlab" style="left:870px;color:#fff">AI Companion</div>
<svg class="abs" style="left:954px;top:959px" width="32" height="30" viewBox="0 0 32 30"><defs><linearGradient id="aig" x1="0" y1="0" x2="1" y2="1"><stop offset="0" stop-color="#f2fbfd"/><stop offset=".45" stop-color="#9fd3e2"/><stop offset="1" stop-color="#e6f4f8"/></linearGradient></defs><path d="M14 2C15 11 18 14.5 28 16 18 17.5 15 21 14 30 13 21 10 17.5 0 16 10 14.5 13 11 14 2z" fill="url(#aig)"/><path d="M25 0.5c.6 2.8 1.4 3.6 4.2 4.2-2.8.6-3.6 1.4-4.2 4.2-.6-2.8-1.4-3.6-4.2-4.2 2.8-.6 3.6-1.4 4.2-4.2z" fill="#d8eef4"/></svg>
<div class="abs tlab" style="left:978px;color:#fff">Aplikasi</div>
<svg class="abs" style="left:1064px;top:960px" width="30" height="29" viewBox="0 0 30 29" fill="none" stroke="#fff" stroke-width="1.8" stroke-linecap="round"><path d="M2.5 12V6.5a4 4 0 0 1 4-4h6"/><path d="M27.5 17v5.5a4 4 0 0 1-4 4h-6"/><circle cx="22.5" cy="7" r="4.2"/><circle cx="7.5" cy="22" r="4.2"/></svg>
<svg class="abs" style="left:1110px;top:969px" width="11" height="8" viewBox="0 0 11 8"><path d="M1.2 6.5L5.5 2.2 9.8 6.5" stroke="#fff" stroke-width="1.8" fill="none" stroke-linecap="round" stroke-linejoin="round"/></svg>
<div class="abs tlab" style="left:1078px;color:#fff">Docs</div>
<svg class="abs" style="left:1166px;top:958px" width="26" height="32" viewBox="0 0 26 32" fill="none" stroke="#fff" stroke-width="1.8" stroke-linecap="round"><rect x="1.5" y="1.5" width="23" height="29" rx="4.5"/><path d="M7 9.5h5M7 15.5h12M7 21.5h9"/></svg>
<svg class="abs" style="left:1208px;top:969px" width="11" height="8" viewBox="0 0 11 8"><path d="M1.2 6.5L5.5 2.2 9.8 6.5" stroke="#fff" stroke-width="1.8" fill="none" stroke-linecap="round" stroke-linejoin="round"/></svg>
<div class="abs tlab" style="left:1189px;color:#fff">Tampilkan teks</div>
<svg class="abs" style="left:1273px;top:962px" width="32" height="24" viewBox="0 0 32 24" fill="none" stroke="#fff" stroke-width="1.8"><rect x="1.5" y="1.5" width="29" height="21" rx="5"/><path d="M13.2 9.2a3.6 3.6 0 1 0 0 5.6M22.7 9.2a3.6 3.6 0 1 0 0 5.6" stroke-width="2.2"/></svg>
<svg class="abs" style="left:1328px;top:969px" width="11" height="8" viewBox="0 0 11 8"><path d="M1.2 6.5L5.5 2.2 9.8 6.5" stroke="#fff" stroke-width="1.8" fill="none" stroke-linecap="round" stroke-linejoin="round"/></svg>
<div class="abs tlab" style="left:1310px;color:#fff">Catatan</div>
<svg class="abs" style="left:1396px;top:958px" width="30" height="32" viewBox="0 0 30 32" fill="none" stroke="#fff" stroke-width="1.8" stroke-linecap="round"><path d="M4.5 25V5a3.5 3.5 0 0 1 3.5-3.5h11A3.5 3.5 0 0 1 22.5 5v20"/><path d="M4.5 25a3.5 3.5 0 0 0 3.5 3.5h6"/><path d="M9.5 7.5h8M9.5 12.5h8M9.5 17.5h5"/><path d="M2 6h3M2 10h3M2 14h3M2 18h3M2 22h3"/><rect x="15.5" y="25.5" width="12" height="5" rx="2.5" fill="#fff" stroke="none"/></svg>
<svg class="abs" style="left:1452px;top:969px" width="11" height="8" viewBox="0 0 11 8"><path d="M1.2 6.5L5.5 2.2 9.8 6.5" stroke="#fff" stroke-width="1.8" fill="none" stroke-linecap="round" stroke-linejoin="round"/></svg>
<div class="abs tlab" style="left:1453px;color:#aab0c4">Jeda/berhenti rekam</div>
<svg class="abs" style="left:1523px;top:958px" width="64" height="31" viewBox="0 0 64 31" fill="none" stroke="#fff" stroke-width="1.8"><rect x="1.5" y="1.5" width="28" height="28" rx="6"/><rect x="34.5" y="1.5" width="28" height="28" rx="6"/><rect x="10" y="10" width="4" height="11" rx="1" fill="#fff" stroke="none"/><rect x="17" y="10" width="4" height="11" rx="1" fill="#fff" stroke="none"/><rect x="42.5" y="9.5" width="12" height="12" rx="2" fill="#fff" stroke="none"/></svg>
<div class="abs tlab" style="left:1586px;color:#fff">Lainnya</div>
<svg class="abs" style="left:1671px;top:958px" width="32" height="32" viewBox="0 0 32 32" fill="none" stroke="#fff" stroke-width="1.8"><circle cx="16" cy="16" r="14.5"/><circle cx="9.5" cy="16" r="1.5" fill="#fff" stroke="none"/><circle cx="16" cy="16" r="1.5" fill="#fff" stroke="none"/><circle cx="22.5" cy="16" r="1.5" fill="#fff" stroke="none"/></svg>
<div class="abs tlab" style="left:1759px;color:#fff">Keluar</div>
<svg class="abs" style="left:1843px;top:958px" width="32" height="31" viewBox="0 0 32 31" fill="none" stroke-linecap="round" stroke-linejoin="round"><path d="M18.5 5L29.5 1.5v24l-11 3.5" stroke="#f0124f" stroke-width="2"/><path d="M21.5 3.5h8" stroke="#f0124f" stroke-width="2"/><circle cx="12" cy="6.5" r="3.3" stroke="#fff" stroke-width="1.7"/><path d="M9 11.5l-5 3.5v4.5M9.5 11.5c2.5 0 5 1 5 4v4l2.5 2M9.5 18l-3 9.5M11 20l3.5 4.5v3.5" stroke="#fff" stroke-width="1.7"/></svg>
<div class="nav" style="left:0"><svg class="abs" style="left:24px;top:37px" width="22" height="36" viewBox="0 0 22 36"><path d="M21 0V36L0 18z" fill="#8c8c8c"/></svg><div class="pg">1/2</div></div>
<div class="nav" style="left:1845px"><svg class="abs" style="left:30px;top:40px" width="22" height="36" viewBox="0 0 22 36"><path d="M0 0V36L21 18z" fill="#2eb8ff"/></svg><div class="pg">1/2</div></div>
<div id="taskbar" class="abs"></div>
<div class="abs" style="left:0;top:1018px;width:1920px;height:1px;background:#06207a"></div><div class="abs" style="left:0;top:1019px;width:1920px;height:1px;background:#efeeea"></div>
<svg class="abs" style="left:24px;top:1038px" width="30" height="28" viewBox="0 0 30 28"><path d="M1.5 13.5C3 5.5 9 2 14 2s11 3.5 12.5 11.5c-1-.8-2-.8-3 0-1-.8-2-.8-3 0-1-.8-2-.8-3 0-1-.8-2-.8-3 0-1-.8-2-.8-3 0-1-.8-2-.8-3 0-1-.8-2-.8-3 0z" fill="#6cb8f0"/><path d="M14 13v10a3 3 0 0 1-6 0" stroke="#8a8a8a" stroke-width="2" fill="none" stroke-linecap="round"/></svg>
<div class="abs" style="left:39px;top:1028px;width:20px;height:20px;border-radius:10px;background:#f4909a;color:#111;font-size:15px;line-height:20px;text-align:center">2</div>
<div class="abs" style="left:64px;top:1031px;font-size:15px;line-height:17px;color:#fff;white-space:nowrap">Hujan ringan</div>
<div class="abs" style="left:64px;top:1050px;font-size:15px;line-height:17px;color:#cfcfcf;white-space:nowrap">Pada sore hari</div>
<svg class="abs" style="left:438px;top:1036px" width="29" height="29" viewBox="0 0 29 29"><defs><linearGradient id="wg" x1="0" y1="0" x2="1" y2="1"><stop offset="0" stop-color="#63d2fb"/><stop offset="1" stop-color="#1a8fe0"/></linearGradient></defs><rect x="0" y="0" width="13.8" height="13.8" fill="url(#wg)"/><rect x="15.2" y="0" width="13.8" height="13.8" fill="url(#wg)"/><rect x="0" y="15.2" width="13.8" height="13.8" fill="url(#wg)"/><rect x="15.2" y="15.2" width="13.8" height="13.8" fill="url(#wg)"/></svg>
<div class="abs" style="left:484px;top:1030px;width:275px;height:40px;border-radius:20px;background:#383838;border:1px solid #474747"></div>
<svg class="abs" style="left:498px;top:1041px" width="20" height="20" viewBox="0 0 20 20" fill="none" stroke="#e0e0e0" stroke-width="2" stroke-linecap="round"><circle cx="8" cy="8" r="6.5"/><path d="M13 13l5.5 5.5"/></svg>
<div class="abs" style="left:530px;top:1040px;font-size:17.5px;line-height:22px;color:#d4d4d4">Pencarian</div>
<svg class="abs" style="left:691px;top:1034px" width="62" height="33" viewBox="0 0 62 33"><path d="M4 8c4-6 12-7 18-4 6-4 16-4 22 0 6-3 14-2 16 5 2 6 1 14-2 19H3C0 22 0 14 4 8z" fill="#d6ecf4"/><path d="M2 28c10-6 20-8 30-4 10-4 20-3 28 3v4H2z" fill="#8dc46a"/><path d="M14 4L7 24h14z" fill="#3d8f45"/><path d="M32 8l-6 16h12z" fill="#4e9e52"/><path d="M50 6l-7 20h14z" fill="#3a8a40"/><path d="M14 10l-4 8h8zM50 12l-4 8h8z" fill="#5fb063"/></svg>
<svg class="abs" style="left:774px;top:1036px" width="31" height="28" viewBox="0 0 31 28"><rect x="1" y="9" width="20" height="18" rx="2.5" fill="#6d6d6d"/><rect x="10" y="1" width="20" height="18" rx="2.5" fill="#e8e8e8"/><rect x="10" y="9" width="11" height="10" fill="#b0b0b0"/></svg>
<svg class="abs" style="left:829px;top:1036px" width="30" height="29" viewBox="0 0 30 29"><defs><linearGradient id="cp1" x1="0" y1="0" x2="1" y2="1"><stop offset="0" stop-color="#2ec0f0"/><stop offset=".5" stop-color="#7a5cf0"/><stop offset="1" stop-color="#f05a9a"/></linearGradient><linearGradient id="cp2" x1="0" y1="1" x2="1" y2="0"><stop offset="0" stop-color="#f7c23a"/><stop offset=".5" stop-color="#f06a6a"/><stop offset="1" stop-color="#b05cf0"/></linearGradient></defs><path d="M9 1h10c2 0 3 1 3.5 3L17 24c-.5 2-2 3.5-4 3.5H4c-2 0-3.3-1.5-3-3.5L6 4C6.5 2 7.5 1 9 1z" fill="url(#cp1)"/><path d="M13 5h12c2 0 3.3 1.5 3 3.5L24 25c-.5 2-2 3-4 3H9l5-19c.3-1.5.5-2.5-1-4z" fill="url(#cp2)" opacity=".9"/></svg>
<svg class="abs" style="left:884px;top:1035px" width="31" height="31" viewBox="0 0 31 31"><defs><linearGradient id="ed" x1="0" y1="1" x2="1" y2="0"><stop offset="0" stop-color="#0c59a4"/><stop offset=".6" stop-color="#1ba0e0"/><stop offset="1" stop-color="#5ad35a"/></linearGradient></defs><circle cx="15.5" cy="15.5" r="15" fill="url(#ed)"/><path d="M8 17c0-5 4-8 9-8s8 3 8 6c0 2-2 3-4 3h-9c0 4 4 7 9 7 3 0 6-1 8-3-2 5-7 8-13 8C10 30 8 24 8 17z" fill="#1a3e7a" opacity=".5"/><path d="M12 17h11" stroke="#fff" stroke-width="0" /></svg>
<svg class="abs" style="left:938px;top:1034px" width="30" height="31" viewBox="0 0 30 31"><circle cx="13" cy="5.5" r="4.5" fill="#7b83eb"/><circle cx="24" cy="8" r="3.5" fill="#5059c9"/><rect x="18" y="13" width="11" height="13" rx="4" fill="#5059c9"/><rect x="6" y="12" width="15" height="17" rx="5" fill="#7b83eb"/><rect x="1" y="14" width="12" height="12" rx="2" fill="#4b53bc"/><path d="M4 17h6M7 17v7" stroke="#fff" stroke-width="1.8"/></svg>
<svg class="abs" style="left:993px;top:1034px" width="31" height="31" viewBox="0 0 31 31"><path d="M10 8V5a3 3 0 0 1 3-3h5a3 3 0 0 1 3 3v3" stroke="#2aa3e8" stroke-width="2" fill="none"/><rect x="1" y="7" width="29" height="23" rx="4" fill="#f4f4f4"/><rect x="9" y="12" width="6" height="6" fill="#f25022"/><rect x="16" y="12" width="6" height="6" fill="#7fba00"/><rect x="9" y="19" width="6" height="6" fill="#00a4ef"/><rect x="16" y="19" width="6" height="6" fill="#ffb900"/></svg>
<svg class="abs" style="left:1049px;top:1035px" width="30" height="30" viewBox="0 0 30 30"><defs><linearGradient id="ba" x1="0" y1="0" x2="1" y2="1"><stop offset="0" stop-color="#1e7cf2"/><stop offset="1" stop-color="#0a4fd0"/></linearGradient></defs><rect width="30" height="30" fill="url(#ba)"/><path d="M4 22L11 8h3L7 22zM11 22L18 8h3L14 22zM19 22l5-12 2 12z" fill="#dce8ff"/></svg>
<svg class="abs" style="left:1104px;top:1036px" width="31" height="28" viewBox="0 0 31 28"><path d="M1 3a2 2 0 0 1 2-2h8l3 3h14a2 2 0 0 1 2 2v19a2 2 0 0 1-2 2H3a2 2 0 0 1-2-2z" fill="#e8a920"/><rect x="1" y="7" width="30" height="20" rx="2" fill="#f9cd4a"/><rect x="6" y="20" width="20" height="8" rx="2" fill="#1c8ae0"/><rect x="10" y="22.5" width="12" height="2" fill="#0b4f9a"/></svg>
<div class="abs" style="left:1115px;top:1072px;width:8px;height:3px;border-radius:2px;background:#9a9a9a"></div>
<svg class="abs" style="left:1159px;top:1035px" width="32" height="31" viewBox="0 0 32 31"><circle cx="15" cy="16" r="15" fill="#ea4335"/><path d="M15 16L28 23.5A15 15 0 0 1 2.5 24z" fill="#34a853"/><path d="M15 16L2 23.5A15 15 0 0 1 4.5 5.2z" fill="#34a853"/><path d="M15 16L28.5 23A15 15 0 0 1 12 30.7z" fill="#fbbc04"/><circle cx="15" cy="16" r="6.5" fill="#fff"/><circle cx="15" cy="16" r="5" fill="#1a73e8"/><circle cx="25" cy="7" r="8" fill="#7d93a6"/><circle cx="22" cy="7" r="4" fill="#b4c4cf"/><circle cx="28" cy="7" r="4" fill="#a9bac6"/></svg>
<div class="abs" style="left:1170px;top:1072px;width:8px;height:3px;border-radius:2px;background:#9a9a9a"></div>
<svg class="abs" style="left:1213px;top:1036px" width="29" height="29" viewBox="0 0 29 29"><rect x="15" y="0" width="13" height="11" rx="2" fill="#33c481"/><rect x="6" y="1" width="10" height="27" rx="2" fill="#21a366"/><rect x="15" y="10" width="13" height="18" rx="2" fill="#107c41"/><rect x="0" y="15" width="13" height="13" rx="2" fill="#185c37"/><path d="M3 18l7 7M10 18l-7 7" stroke="#fff" stroke-width="2"/></svg>
<div class="abs" style="left:1225px;top:1072px;width:8px;height:3px;border-radius:2px;background:#9a9a9a"></div>
<svg class="abs" style="left:1268px;top:1036px" width="29" height="29" viewBox="0 0 29 29"><rect x="6" y="0" width="23" height="10" rx="2" fill="#9ac3ff"/><rect x="6" y="9" width="23" height="10" fill="#4a90f0"/><rect x="6" y="18" width="23" height="10" rx="2" fill="#1d5fd1"/><rect x="0" y="15" width="13" height="13" rx="2" fill="#1040b0"/><path d="M2.5 18l2 7 2-5 2 5 2-7" stroke="#fff" stroke-width="1.5" fill="none"/></svg>
<div class="abs" style="left:1280px;top:1072px;width:8px;height:3px;border-radius:2px;background:#9a9a9a"></div>
<div class="abs" style="left:1314px;top:1026px;width:49px;height:49px;border-radius:5px;background:#333333"></div>
<svg class="abs" style="left:1324px;top:1034px" width="31" height="31" viewBox="0 0 31 31"><circle cx="15.5" cy="15.5" r="15" fill="#0b5cff"/><text x="15.5" y="18.5" font-family="Liberation Sans" font-size="8.5" font-weight="bold" fill="#fff" text-anchor="middle">zoom</text></svg>
<div class="abs" style="left:1329px;top:1071px;width:20px;height:3px;border-radius:2px;background:#4cc2ff"></div>
<div class="abs" style="left:1369px;top:1026px;width:50px;height:49px;border-radius:5px;background:#7b3c46"></div>
<svg class="abs" style="left:1380px;top:1037px" width="28" height="26" viewBox="0 0 28 26"><rect x="0" y="0" width="28" height="26" rx="4" fill="#2a7fd6"/><path d="M0 20l9-10 7 8 4-4 8 8v1a3 3 0 0 1-3 3H3a3 3 0 0 1-3-3z" fill="#59c6f0"/><circle cx="21" cy="6" r="3" fill="#fff"/></svg>
<div class="abs" style="left:1374px;top:1071px;width:40px;height:3px;border-radius:2px;background:#f7a0b4"></div>
<svg class="abs" style="left:1434px;top:1035px" width="30" height="30" viewBox="0 0 30 30"><circle cx="17" cy="15" r="13" fill="#ed6c47"/><path d="M17 2a13 13 0 0 1 13 13H17z" fill="#ff8f6b"/><path d="M17 15h13a13 13 0 0 1-13 13z" fill="#d35230"/><rect x="0" y="15" width="13" height="13" rx="2" fill="#c43e1c"/><path d="M4 26V18h3a2 2 0 0 1 0 4.5H4" stroke="#fff" stroke-width="1.6" fill="none"/></svg>
<div class="abs" style="left:1445px;top:1072px;width:8px;height:3px;border-radius:2px;background:#9a9a9a"></div>
<svg class="abs" style="left:1560px;top:1043px" width="16" height="11" viewBox="0 0 16 11"><path d="M2 9l6-6 6 6" stroke="#fff" stroke-width="2" fill="none" stroke-linecap="round"/></svg>
<svg class="abs" style="left:1596px;top:1039px" width="24" height="22" viewBox="0 0 24 22"><path d="M5 17h14a4 4 0 0 0 .5-8A6 6 0 0 0 8 7 4.5 4.5 0 0 0 5 17z" fill="#7a7a7a"/><path d="M2 2l18 18" stroke="#262626" stroke-width="3.5"/><path d="M2 2l18 18" stroke="#cfcfcf" stroke-width="1.6"/></svg>
<svg class="abs" style="left:1637px;top:1039px" width="24" height="23" viewBox="0 0 24 23" fill="none" stroke="#fff" stroke-width="1.5" stroke-linecap="round"><path d="M3 10a8 8 0 0 1 15-3"/><path d="M18 2.5V7h-4.5"/><path d="M19 13a8 8 0 0 1-14 4"/><path d="M5 21v-4h4"/><circle cx="16" cy="16" r="5" fill="#1a7ae8" stroke="none"/></svg>
<svg class="abs" style="left:1675px;top:1039px" width="30" height="23" viewBox="0 0 30 23" fill="none" stroke="#5ac8ea" stroke-width="1.6" stroke-linecap="round"><rect x="4" y="1" width="6" height="11" rx="3"/><path d="M1.5 9a5.5 5.5 0 0 0 11 0M7 14.5v2.5"/><path d="M14 14l14-6-5 14-2.5-6z"/></svg>
<svg class="abs" style="left:1717px;top:1040px" width="23" height="18" viewBox="0 0 23 18" fill="none" stroke="#fff" stroke-width="1.6" stroke-linecap="round"><path d="M1.5 6a14 14 0 0 1 20 0"/><path d="M4.5 9.5a9.5 9.5 0 0 1 14 0"/><path d="M7.8 13a5 5 0 0 1 7.4 0"/><circle cx="11.5" cy="16" r="1.3" fill="#fff" stroke="none"/></svg>
<svg class="abs" style="left:1747px;top:1040px" width="23" height="20" viewBox="0 0 23 20" fill="none" stroke="#fff" stroke-width="1.5" stroke-linejoin="round" stroke-linecap="round"><path d="M1.5 7h3.5l5-4.5v15L5 13H1.5z"/><path d="M13 6.5a4.5 4.5 0 0 1 0 7M16 4a8 8 0 0 1 0 12M19 1.5a11.5 11.5 0 0 1 0 17"/></svg>
<svg class="abs" style="left:1777px;top:1043px" width="22" height="14" viewBox="0 0 22 14"><rect x="1" y="1" width="17.5" height="12" rx="3" fill="none" stroke="#fff" stroke-width="1.5"/><rect x="3" y="3" width="13.5" height="8" rx="1.5" fill="#fff"/><rect x="19.5" y="4.5" width="2" height="5" rx="1" fill="#fff"/></svg>
<div class="abs" style="left:1796px;top:1031.5px;width:101px;text-align:right;font-size:16px;line-height:18px;color:#fff">11.50</div>
<div class="abs" style="left:1796px;top:1051.5px;width:101px;text-align:right;font-size:16px;line-height:18px;color:#fff">07/12/2025</div>
</body></html>
